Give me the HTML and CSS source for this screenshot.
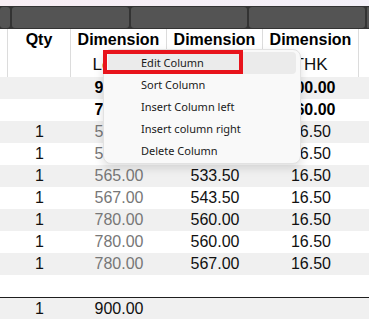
FILE: index.html
```html
<!DOCTYPE html>
<html lang="en">
<head>
    <meta charset="UTF-8">
    <meta name="viewport" content="width=device-width, initial-scale=1.0">
    <title>Cut List</title>
    <link rel="stylesheet" href="styles.css">
</head>
<body>
    <div class="top-strip"></div>
    <div class="tabs">
        <div class="tab tab-edge"></div>
        <div class="tab tab-a"></div>
        <div class="tab tab-b"></div>
        <div class="tab tab-c"></div>
        <div class="tab tab-rest"></div>
    </div>

    <table class="sheet">
        <colgroup>
            <col class="c-edge">
            <col class="c-qty">
            <col class="c-dim">
            <col class="c-dim">
            <col class="c-dim">
            <col class="c-end">
        </colgroup>
        <thead>
            <tr class="head-title">
                <th></th>
                <th>Qty</th>
                <th>Dimension</th>
                <th>Dimension</th>
                <th>Dimension</th>
                <th class="last"></th>
            </tr>
            <tr class="head-sub">
                <th></th>
                <th></th>
                <th>Length</th>
                <th>Width</th>
                <th>THK</th>
                <th class="last"></th>
            </tr>
        </thead>
        <tbody>
            <tr class="group">
                <td></td><td></td><td>900.00</td><td>600.00</td><td>600.00</td><td></td>
            </tr>
            <tr class="group">
                <td></td><td></td><td>780.00</td><td>560.00</td><td>560.00</td><td></td>
            </tr>
            <tr>
                <td></td><td>1</td><td class="len">560.00</td><td>533.50</td><td>16.50</td><td></td>
            </tr>
            <tr>
                <td></td><td>1</td><td class="len">565.00</td><td>533.50</td><td>16.50</td><td></td>
            </tr>
            <tr>
                <td></td><td>1</td><td class="len">565.00</td><td>533.50</td><td>16.50</td><td></td>
            </tr>
            <tr>
                <td></td><td>1</td><td class="len">567.00</td><td>543.50</td><td>16.50</td><td></td>
            </tr>
            <tr>
                <td></td><td>1</td><td class="len">780.00</td><td>560.00</td><td>16.50</td><td></td>
            </tr>
            <tr>
                <td></td><td>1</td><td class="len">780.00</td><td>560.00</td><td>16.50</td><td></td>
            </tr>
            <tr>
                <td></td><td>1</td><td class="len">780.00</td><td>567.00</td><td>16.50</td><td></td>
            </tr>
            <tr>
                <td></td><td></td><td></td><td></td><td></td><td></td>
            </tr>
        </tbody>
        <tfoot>
            <tr>
                <td></td><td>1</td><td>900.00</td><td></td><td></td><td></td>
            </tr>
        </tfoot>
    </table>

    <div class="ctx-menu">
        <div class="ctx-item active">Edit Column</div>
        <div class="ctx-item">Sort Column</div>
        <div class="ctx-item">Insert Column left</div>
        <div class="ctx-item">Insert column right</div>
        <div class="ctx-item">Delete Column</div>
    </div>
    <div class="mark-box"></div>
</body>
</html>
```

FILE: styles.css
```css
body {
    margin: 0;
    position: relative;
    width: 369px;
    height: 330px;
    overflow: hidden;
    background-color: #fff;
    font-family: "Liberation Sans", Arial, sans-serif;
    color: #111;
}
.top-strip {
    height: 6px;
    background: linear-gradient(90deg, #f8eef4, #f3f0f8);
}
.tabs {
    display: flex;
    gap: 2px;
    height: 21px;
    padding: 1px 0;
    background-color: #333;
}
.tab {
    background-color: #545454;
    border-radius: 3px;
}
.tab-edge {
    width: 10px;
}
.tab-a {
    width: 117px;
}
.tab-b {
    width: 116px;
}
.tab-c {
    width: 116px;
}
.tab-rest {
    flex: 1;
}
.sheet {
    width: 369px;
    table-layout: fixed;
    border-collapse: separate;
    border-spacing: 0;
    font-size: 16px;
}
.c-edge {
    width: 8px;
}
.c-qty {
    width: 63px;
}
.c-dim {
    width: 96px;
}
.c-end {
    width: 10px;
}
th, td {
    padding: 0;
    height: 22px;
    text-align: center;
    white-space: nowrap;
    overflow: hidden;
}
thead th {
    border-right: 1px solid #dcdcdc;
    background-color: #fff;
}
thead th.last {
    border-right: none;
}
.head-title th {
    font-weight: bold;
    color: #000;
}
.head-sub th {
    height: 26px;
    font-weight: normal;
    font-size: 17px;
    vertical-align: bottom;
    padding-bottom: 2px;
    box-sizing: border-box;
}
tbody tr:nth-child(odd) td {
    background-color: #f0f0f0;
}
tbody tr.group td {
    font-weight: bold;
    color: #000;
}
td.len {
    color: #777;
}
tfoot td {
    border-top: 1px solid #1e1e1e;
    background-color: #f0f0f0;
    height: 21px;
}
.ctx-menu {
    position: absolute;
    left: 103px;
    top: 49px;
    width: 198px;
    box-sizing: border-box;
    padding: 2px 4px 1px;
    background-color: #f9f9f9;
    border: 1px solid #e2e2e2;
    border-radius: 8px;
    box-shadow: 0 4px 10px rgba(0, 0, 0, 0.13);
    font-family: "Noto Sans", sans-serif;
    font-size: 11px;
    color: #1a1a1a;
}
.ctx-item {
    height: 22px;
    line-height: 22px;
    padding-left: 33px;
    border-radius: 4px;
}
.ctx-item.active {
    background-color: #ebebeb;
}
.mark-box {
    position: absolute;
    left: 103px;
    top: 50px;
    width: 140px;
    height: 24px;
    box-sizing: border-box;
    border: 4px solid #e8141c;
}
```
